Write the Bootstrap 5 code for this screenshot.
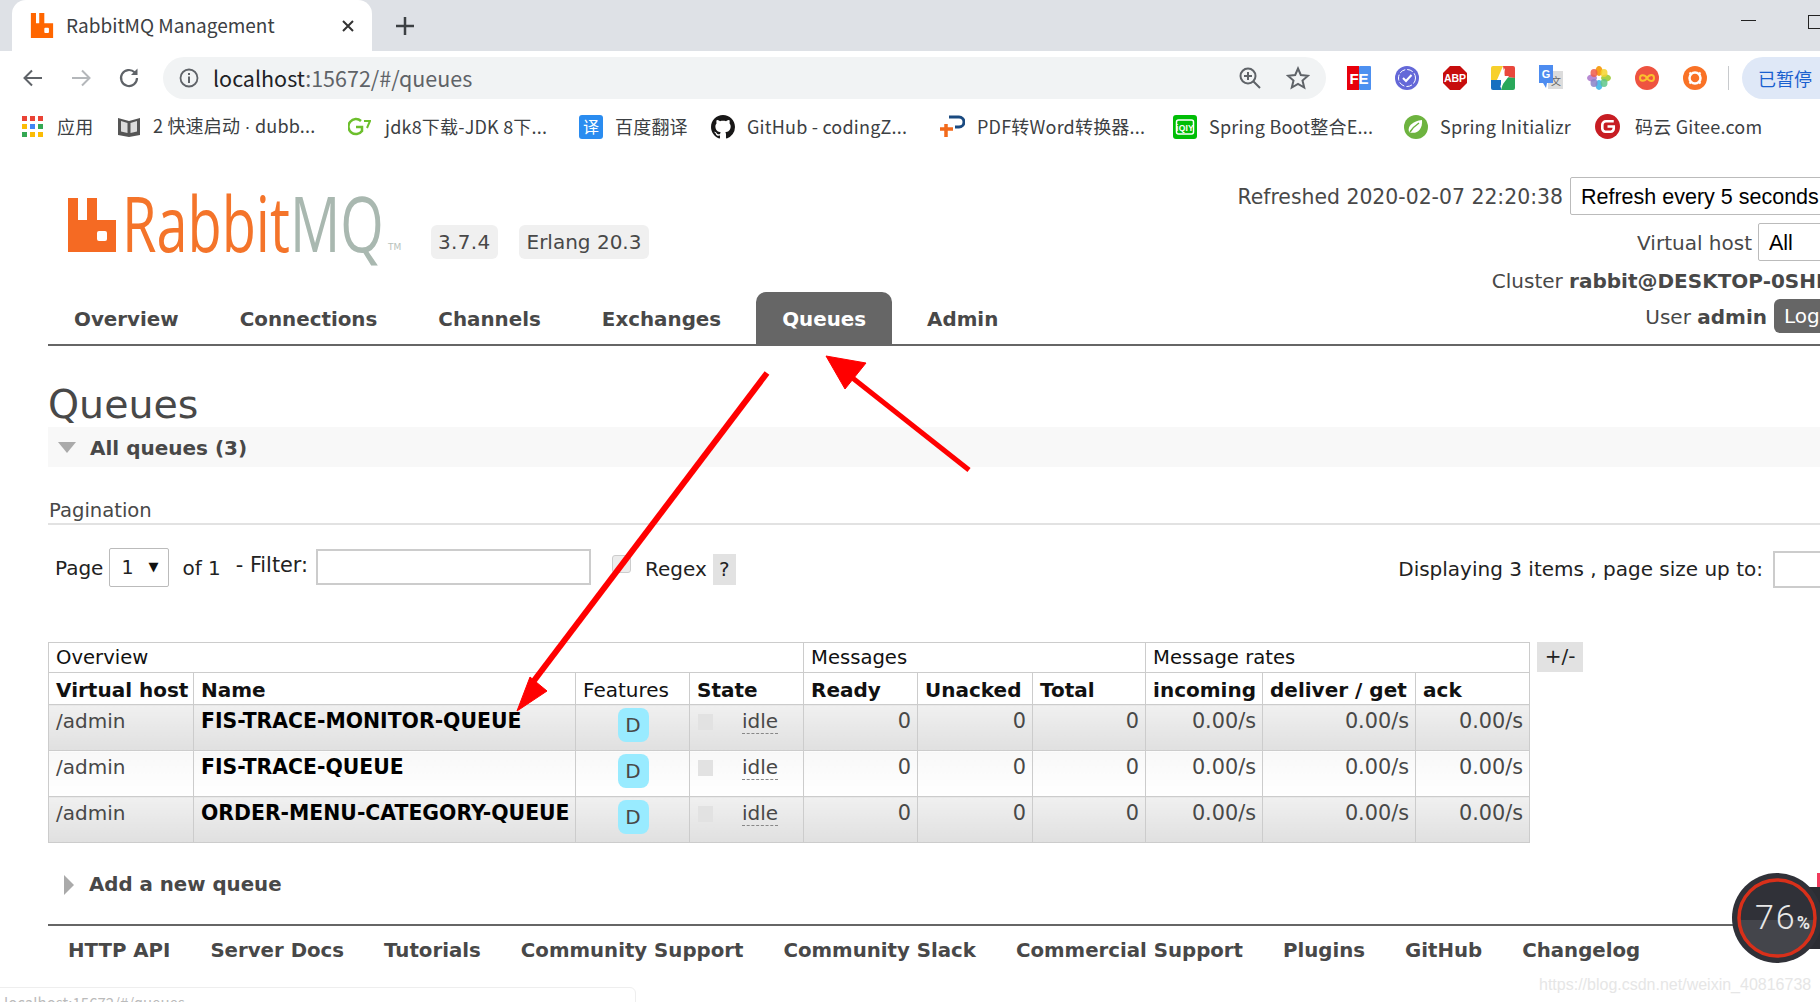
<!DOCTYPE html>
<html lang="en">
<head>
<meta charset="utf-8">
<title>RabbitMQ Management</title>
<link href="https://cdn.jsdelivr.net/npm/bootstrap@5.3.0/dist/css/bootstrap.min.css" rel="stylesheet">
<style>
html,body{margin:0;width:1820px;height:1002px;overflow:hidden;background:#fff}
body{font-family:"DejaVu Sans",Verdana,sans-serif;font-size:20px;color:#484848;position:relative}
.cr{font-family:"Noto Sans CJK SC","Liberation Sans",sans-serif}
.tabstrip{height:51px;background:#dee1e6;padding-left:12px}
.tabbox{width:360px;height:51px;background:#fff;border-radius:14px 14px 0 0;padding:0 17px 0 18px;font-size:19px;color:#3c4043;flex:none}
.tabplus{margin-left:23px;flex:none}
.winbtns{margin-left:auto;gap:52px;margin-right:-3px;align-self:flex-start}
.winmin{width:15px;height:1px;background:#222;margin-top:20px}
.winmax{width:15px;height:14px;border:1px solid #222;margin-top:15px}
.toolbar{height:54px;padding-top:6px;background:#fff}
.toolbar>*{flex:none}
.tbh{height:42px}
.navbtns{width:163px;padding-left:21px;gap:24px}
.urlpill{width:1163px;height:42px;background:#f1f3f4;border-radius:21px;padding:0 16px;font-size:21.5px;color:#202124}
.urlpill .dim{color:#5f6368}
.urltext{margin-left:14px}
.urlicons{margin-left:auto;gap:24px}
.exts{gap:24px;margin-left:21px}
.exts svg{display:block}
.vsep{width:1px;height:24px;background:#c8cacd;margin-left:21px}
.pausepill{margin-left:13px;width:120px;height:42px;border-radius:21px 0 0 21px;background:#dfe8f7;color:#1a5fcf;font-size:18px;padding-left:16px}
.bmbar{height:45px;padding-left:22px;padding-bottom:2px;font-size:18px;letter-spacing:.2px;color:#3c4043;white-space:nowrap}
.bm{gap:12px;flex:none}
.bm:nth-child(1){width:95px;gap:14px}.bm:nth-child(2){width:231px}.bm:nth-child(3){width:231px;gap:14px}.bm:nth-child(4){width:132px}.bm:nth-child(5){width:229px}.bm:nth-child(6){width:233px}.bm:nth-child(7){width:231px}.bm:nth-child(8){width:191px}.bm:nth-child(9){gap:15px}
.middot{font-family:"Liberation Sans",sans-serif}
.pagebox{margin-left:48px;width:1812px}
.hdr{border-bottom:2px solid #666;height:196px}
.leftcol{padding-top:45px}
.logorow{height:64px}
.logobox{width:354px;height:57px;padding-left:20px}
.logoicon{flex:none;display:block;margin-top:3px}
.logotext{display:block;flex:none;width:264px;height:55px;font-family:"Open Sans",sans-serif;font-size:76px;line-height:55px;font-weight:400;color:#f4742a;margin-left:6px;transform:scaleX(.735);transform-origin:left center;white-space:nowrap}
.logotext .g{color:#a9b8b0}
.logotm{font-size:9px;color:#b8c2bc;align-self:flex-end;margin-left:2px;margin-bottom:-2px}
.pillv{background:#f0f0f0;border-radius:6px;height:34px;line-height:35px;padding:0 8px;color:#484848}
.p1{margin-left:29px;width:66.5px;text-align:center;letter-spacing:.35px;padding:0}
.p2{margin-left:21px}
.navmain{margin-top:33px;gap:9px}
.navlnk{display:block;padding:0 26px;height:52px;line-height:55px;font-weight:700;font-size:19.87px;color:#484848;text-decoration:none;border-radius:10px 10px 0 0}
.navlnk.act{background:#666;color:#fff}
.rightcol{padding-top:27px;text-align:right;white-space:nowrap}
.rightcol .txt{margin-top:2px}
.refr{font-size:20.4px}
.sel{height:38px;border:1px solid #bbb;border-radius:2px;background:#fff;color:#000;font-family:"Liberation Sans",sans-serif;font-size:21.5px;padding:0 10px;text-align:left;line-height:38px}
.sel1{width:290px;margin-left:7px}
.sel2{width:102px;margin-left:6px}
.rr{height:38px}
.rr2{margin-top:8px}
.rr3{margin-top:8px;height:24px}
.rr4{margin-top:6px;height:34px}
.clusterbox{margin-right:-19px}
.logbtn{height:34px;line-height:34px;width:86px;background:#666;color:#fff;border-radius:6px;margin-left:7px;padding-left:10px;text-align:left}
.h1q{font-size:39.5px;font-weight:400;line-height:44px;margin:36px 0 0;color:#484848;height:45px}
.sect{height:40px;background:#f8f8f8;font-weight:700;padding-left:10px;gap:14px}
.sect span+span{padding-top:2px}
.tri-d{width:0;height:0;border-left:9px solid transparent;border-right:9px solid transparent;border-top:11px solid #aaa}
.tri-r{width:0;height:0;border-top:10px solid transparent;border-bottom:10px solid transparent;border-left:10px solid #aaa;margin-left:16px}
.paglabel{margin-top:28px;height:30px;line-height:31px;border-bottom:2px solid #e2e2e2;padding-left:1px;font-size:19.6px}
.pagrow{margin-top:22px;height:40px;color:#222}
.psel{width:60px;height:39px;border:1px solid #bbb;border-radius:2px;color:#222;padding:0 10px 0 11px;margin:0 13px 0 6px;font-size:19px}
.psel i{font-style:normal;font-size:13px;color:#111}
.mlpage{margin-left:7px;margin-top:2px}
.mlof{margin-right:15px;margin-top:2px}
.fltlbl{margin-top:-2px;font-size:20.8px}
.fltinput{width:275px;height:36px;border:2px solid #ccc;background:#fff;margin:0 21px 0 8px}
.chk{width:19px;height:18px;border:1px solid #ccc;border-radius:3px;background:#ececec;margin:-6px 14px 0 0}
.rgx{margin-top:4px}
.qmark{width:23px;height:31px;background:#e2e2e2;text-align:center;line-height:31px;margin:4px 0 0 6px}
.dspl{margin-top:3px;margin-left:auto}
.sizeinput{width:87px;height:37px;border:2px solid #ccc;margin:4px 0 0 10px}
.tblwrap{margin-top:55px}
.qt{table-layout:fixed;width:1481px;margin:0;--bs-table-bg:transparent;--bs-table-color:#484848;border-color:#ccc;font-size:20px;border-collapse:collapse}
.qt col:nth-child(1){width:145px}.qt col:nth-child(2){width:382px}.qt col:nth-child(3){width:114px}.qt col:nth-child(4){width:114px}.qt col:nth-child(5){width:114px}.qt col:nth-child(6){width:115px}.qt col:nth-child(7){width:113px}.qt col:nth-child(8){width:117px}.qt col:nth-child(9){width:153px}.qt col:nth-child(10){width:114px}
.qt th,.qt td{border:1px solid #ccc;padding:0 6px 0 7px;vertical-align:top;white-space:nowrap}
.qt thead th{background:#fff;color:#111;height:30px;line-height:28px;padding-top:1px;font-weight:400;font-size:19.6px}
.qt thead tr.sub th{font-weight:700;height:31px;padding-top:3px;font-size:20px}
.qt thead tr.sub th.fw-normal{font-weight:400}
.qt tbody td{height:46px;line-height:32px;color:#484848}
.qt tbody tr.odd td{background:linear-gradient(#f0f0f0,#e0e0e0)}
.qt tbody tr.even td{background:linear-gradient(#f8f8f8,#fff)}
.qt td.nm{font-weight:700;color:#000;font-size:20.4px}
.qt td.num{text-align:right;font-size:20.8px}
.dbadge{display:block;width:31px;height:34px;margin:3px auto 0;background:#99ebff;border-radius:8px;text-align:center;line-height:34px;color:#484848}
.stbox{display:inline-block;width:15px;height:16px;background:#e2e2e2;vertical-align:top;margin:9px 29px 0 1px}
.idle{border-bottom:1px dashed #888}
.plusbtn{width:46px;height:30px;background:#e2e2e2;margin-left:7px;text-align:center;line-height:29px;color:#222}
.addq{margin-top:20px;height:44px;font-weight:700;font-size:19.8px;gap:15px}
.foot{margin-top:17px;border-top:2px solid #666;font-weight:700;font-size:19.75px;padding-top:11px;height:52px;line-height:28px}
.foot a{color:#484848;text-decoration:none;padding:0 20px}
.arrows{position:absolute;left:0;top:0;pointer-events:none}
.statusb{position:absolute;left:-1px;top:987px;width:637px;height:30px;border:1px solid #eee;border-radius:0 6px 0 0;background:#fff;font-size:15px;color:#bbb;padding:6px 0 0 4px;line-height:18px}
.wm{position:absolute;left:1539px;top:973px;font-family:"Liberation Sans",sans-serif;font-size:16px;color:#e6e6e6;white-space:nowrap}
.gauge{position:absolute;left:1732px;top:873px}
</style>
</head>
<body>
<div class="cr">
  <div class="tabstrip d-flex align-items-center">
    <div class="tabbox d-flex align-items-center">
      <svg width="24" height="25" viewBox="0 0 48 54"><path fill="#f60" d="M0 0H11V22H18V0H29V22H48V54H0Z"/><rect x="29" y="32" width="10" height="11" rx="2" fill="#fff"/></svg>
      <span class="ms-2 ps-1 flex-grow-1">RabbitMQ Management</span>
      <svg width="14" height="14" viewBox="0 0 14 14"><path d="M2 2L12 12M12 2L2 12" stroke="#333" stroke-width="2"/></svg>
    </div>
    <svg class="tabplus" width="20" height="20" viewBox="0 0 20 20"><path d="M10 1V19M1 10H19" stroke="#3c4043" stroke-width="2.500"/></svg>
    <div class="winbtns d-flex">
      <div class="winmin"></div><div class="winmax"></div>
    </div>
  </div>
  <div class="toolbar d-flex align-items-start">
    <div class="navbtns tbh d-flex align-items-center">
      <svg width="24" height="24" viewBox="0 0 24 24"><path d="M21 12H4M11 4.500L3.500 12L11 19.500" fill="none" stroke="#5f6368" stroke-width="2"/></svg>
      <svg width="24" height="24" viewBox="0 0 24 24"><path d="M3 12H20M13 4.500L20.500 12L13 19.500" fill="none" stroke="#b4b7ba" stroke-width="2"/></svg>
      <svg width="24" height="24" viewBox="0 0 24 24"><path d="M20 12a8 8 0 1 1-2.400-5.700" fill="none" stroke="#5f6368" stroke-width="2.200"/><path d="M20.500 2.500V9H14Z" fill="#5f6368"/></svg>
    </div>
    <div class="urlpill d-flex align-items-center">
      <svg width="20" height="20" viewBox="0 0 20 20"><circle cx="10" cy="10" r="8.500" fill="none" stroke="#5f6368" stroke-width="1.800"/><rect x="9" y="8.500" width="2" height="6.500" fill="#5f6368"/><rect x="9" y="5" width="2" height="2" fill="#5f6368"/></svg>
      <span class="urltext">localhost<span class="dim">:15672/#/queues</span></span>
      <div class="urlicons d-flex align-items-center">
        <svg width="24" height="24" viewBox="0 0 24 24"><circle cx="10" cy="10" r="7.500" fill="none" stroke="#5f6368" stroke-width="2"/><path d="M15.500 15.500L22 22M6 10H14M10 6V14" stroke="#5f6368" stroke-width="2"/></svg>
        <svg width="24" height="24" viewBox="0 0 24 24"><path d="M12 2.500L14.800 9L22 9.700L16.500 14.500L18.200 21.500L12 17.800L5.800 21.500L7.500 14.500L2 9.700L9.200 9Z" fill="none" stroke="#5f6368" stroke-width="2"/></svg>
      </div>
    </div>
    <div class="tbh d-flex align-items-center">
      <div class="exts d-flex align-items-center">
        <svg width="24" height="24" viewBox="0 0 24 24"><rect width="12" height="24" fill="#e8000b"/><rect x="12" width="12" height="24" rx="1" fill="#4d90f0"/><text x="12" y="18" text-anchor="middle" font-family="Liberation Sans" font-weight="700" font-size="15" fill="#fff">FE</text></svg>
        <svg width="24" height="24" viewBox="0 0 24 24"><circle cx="12" cy="12" r="12" fill="#6468d8"/><circle cx="12" cy="12" r="8.500" fill="none" stroke="#fff" stroke-width="1" stroke-dasharray="6 2"/><path d="M8 12L11 15L16.500 9" fill="none" stroke="#fff" stroke-width="2"/></svg>
        <svg width="24" height="24" viewBox="0 0 24 24"><path d="M7 0H17L24 7V17L17 24H7L0 17V7Z" fill="#c70d0d"/><text x="12" y="16" text-anchor="middle" font-family="Liberation Sans" font-weight="700" font-size="10.500" fill="#fff">ABP</text></svg>
        <svg width="24" height="24" viewBox="0 0 24 24"><path d="M0 2a2 2 0 0 1 2-2H12L6 14L0 16Z" fill="#f7d02c"/><path d="M12 0H22a2 2 0 0 1 2 2V12L14 11Z" fill="#e9473c"/><path d="M14 11L24 12V22a2 2 0 0 1-2 2H10Z" fill="#2aa85a"/><path d="M0 14L10 14V24H2a2 2 0 0 1-2-2Z" fill="#1670c0"/><path d="M14 2L6 14H11L9 22L18 10H13Z" fill="#fff"/></svg>
        <svg width="24" height="26" viewBox="0 0 24 26"><rect x="9" y="6" width="15" height="18" fill="#dcdcdc"/><text x="17" y="20" text-anchor="middle" font-family="Noto Sans CJK SC" font-size="10" fill="#666">文</text><path d="M0 0H14V18H8L7 23L4 18H0Z" fill="#4d8cf0"/><text x="7" y="13" text-anchor="middle" font-family="Liberation Sans" font-weight="700" font-size="11" fill="#fff">G</text></svg>
        <svg width="24" height="24" viewBox="0 0 24 24"><ellipse cx="12" cy="5" rx="3.500" ry="5" fill="#f7a11d"/><ellipse cx="12" cy="19" rx="3.500" ry="5" fill="#54bde8"/><ellipse cx="5" cy="12" rx="5" ry="3.500" fill="#b78ad3"/><ellipse cx="19" cy="12" rx="5" ry="3.500" fill="#a8d14a"/><ellipse cx="7" cy="7" rx="3.500" ry="4" fill="#ee5c4a" opacity=".85"/><ellipse cx="17" cy="7" rx="3.500" ry="4" fill="#f5d430" opacity=".85"/><ellipse cx="7" cy="17" rx="3.500" ry="4" fill="#8a82c8" opacity=".85"/><ellipse cx="17" cy="17" rx="3.500" ry="4" fill="#5fc58a" opacity=".85"/></svg>
        <svg width="24" height="24" viewBox="0 0 24 24"><circle cx="12" cy="12" r="12" fill="#ee5340"/><path d="M12 12C9.500 8 5 8.500 5 12S9.500 16 12 12S19 8 19 12S14.500 16 12 12Z" fill="none" stroke="#fbc02d" stroke-width="2"/></svg>
        <svg width="24" height="24" viewBox="0 0 24 24"><circle cx="12" cy="12" r="12" fill="#f97226"/><circle cx="12" cy="12" r="5.500" fill="none" stroke="#fff" stroke-width="2.500"/><path d="M6.500 6.500L8.500 8.500M17.500 6.500L15.500 8.500M6.500 17.500L8.500 15.500M17.500 17.500L15.500 15.500" stroke="#fff" stroke-width="2"/></svg>
      </div>
      <div class="vsep"></div>
      <div class="pausepill d-flex align-items-center">已暂停</div>
    </div>
  </div>
  <div class="bmbar d-flex align-items-center">
    <div class="bm d-flex align-items-center"><svg width="21" height="21" viewBox="0 0 21 21"><g><rect width="5" height="5" fill="#ea4335"/><rect x="8" width="5" height="5" fill="#ea4335"/><rect x="16" width="5" height="5" fill="#ea4335"/><rect y="8" width="5" height="5" fill="#fbbc05"/><rect x="8" y="8" width="5" height="5" fill="#4285f4"/><rect x="16" y="8" width="5" height="5" fill="#34a853"/><rect y="16" width="5" height="5" fill="#34a853"/><rect x="8" y="16" width="5" height="5" fill="#fbbc05"/><rect x="16" y="16" width="5" height="5" fill="#fbbc05"/></g></svg><span>应用</span></div>
    <div class="bm d-flex align-items-center"><svg width="24" height="22" viewBox="0 0 24 22"><path d="M1 2L12 5L23 2V19L12 21L1 19Z" fill="#555"/><path d="M4 5L10.500 7V17L4 15.500ZM20 5L13.500 7V17L20 15.500Z" fill="#ddd"/></svg><span>2 快速启动 <span class="middot">·</span> dubb...</span></div>
    <div class="bm d-flex align-items-center"><svg width="23" height="22" viewBox="0 0 23 22"><path d="M13 5A7.500 7.500 0 1 0 14 15V11H8" fill="none" stroke="#6cbf2c" stroke-width="2.500"/><path d="M16 5H22L19 12" fill="none" stroke="#6cbf2c" stroke-width="2"/></svg><span>jdk8下载-JDK 8下...</span></div>
    <div class="bm d-flex align-items-center"><svg width="24" height="24" viewBox="0 0 24 24"><rect width="24" height="24" rx="3" fill="#2a8cf0"/><text x="12" y="18" text-anchor="middle" font-family="Noto Sans CJK SC" font-size="16" fill="#fff">译</text></svg><span>百度翻译</span></div>
    <div class="bm d-flex align-items-center"><svg width="24" height="24" viewBox="0 0 16 16"><path fill="#181717" d="M8 0C3.580 0 0 3.580 0 8c0 3.540 2.290 6.530 5.470 7.590.4.070.55-.17.55-.38 0-.19-.01-.82-.01-1.490-2.010.37-2.530-.49-2.690-.94-.09-.23-.48-.94-.82-1.130-.28-.15-.68-.52-.01-.53.63-.01 1.080.58 1.230.82.72 1.210 1.870.87 2.330.66.070-.52.28-.87.51-1.070-1.780-.2-3.640-.89-3.640-3.950 0-.87.31-1.590.82-2.150-.08-.2-.36-1.020.08-2.120 0 0 .67-.21 2.200.82.64-.18 1.320-.27 2-.27s1.360.09 2 .27c1.530-1.040 2.200-.82 2.200-.82.44 1.100.16 1.920.08 2.120.51.56.82 1.270.82 2.150 0 3.070-1.870 3.750-3.650 3.950.29.25.54.73.54 1.480 0 1.070-.01 1.930-.01 2.200 0 .21.15.46.55.38A8.010 8.010 0 0 0 16 8c0-4.420-3.580-8-8-8z"/></svg><span>GitHub - codingZ...</span></div>
    <div class="bm d-flex align-items-center"><svg width="25" height="24" viewBox="0 0 25 24"><path d="M9 2H19a5 5 0 0 1 0 10H15" fill="none" stroke="#1a4a80" stroke-width="3"/><path d="M6 9V22M0 14H13" stroke="#f26a1b" stroke-width="3.500"/></svg><span>PDF转Word转换器...</span></div>
    <div class="bm d-flex align-items-center"><svg width="24" height="24" viewBox="0 0 24 24"><rect width="24" height="24" rx="3" fill="#00be06"/><rect x="3.500" y="5" width="17" height="14" rx="2" fill="none" stroke="#fff" stroke-width="1.500"/><text x="12" y="15.500" text-anchor="middle" font-family="Liberation Sans" font-weight="700" font-size="8.500" fill="#fff">iQIY</text></svg><span>Spring Boot整合E...</span></div>
    <div class="bm d-flex align-items-center"><svg width="24" height="24" viewBox="0 0 24 24"><circle cx="12" cy="12" r="12" fill="#6db33f"/><path d="M18 5C19 15 12 20 5 17C3 11 9 6 18 5Z" fill="#fff"/><path d="M6 17C9 12 12 10 15 8" stroke="#6db33f" stroke-width="1.500" fill="none"/></svg><span>Spring Initializr</span></div>
    <div class="bm d-flex align-items-center"><svg width="25" height="25" viewBox="0 0 24 24"><circle cx="12" cy="12" r="12" fill="#c71d23"/><path d="M18 7H10.500a3.500 3.500 0 0 0-3.500 3.500V14a3 3 0 0 0 3 3h5a3 3 0 0 0 3-3V12H12" fill="none" stroke="#fff" stroke-width="2.500"/></svg><span>码云 Gitee.com</span></div>
  </div>
</div>
<div class="pagebox">
  <div class="hdr d-flex justify-content-between">
    <div class="leftcol">
      <div class="logorow d-flex align-items-start">
        <div class="logobox d-flex">
          <svg class="logoicon" width="48" height="54" viewBox="0 0 48 54"><path fill="#f56a23" d="M0 0H10V22H19V0H29V22H48V54H0Z"/><rect x="29" y="33" width="10" height="10" rx="2" fill="#fff"/></svg>
          <span class="logotext">Rabbit<span class="g">MQ</span></span>
          <span class="logotm">TM</span>
        </div>
        <div class="pillv p1 mt-auto">3.7.4</div>
        <div class="pillv p2 mt-auto">Erlang 20.3</div>
      </div>
      <nav class="navmain d-flex">
        <a class="navlnk" href="#">Overview</a>
        <a class="navlnk" href="#">Connections</a>
        <a class="navlnk" href="#">Channels</a>
        <a class="navlnk" href="#">Exchanges</a>
        <a class="navlnk act" href="#">Queues</a>
        <a class="navlnk" href="#">Admin</a>
      </nav>
    </div>
    <div class="rightcol">
      <div class="rr d-flex justify-content-end align-items-center"><span class="txt refr">Refreshed 2020-02-07 22:20:38</span><div class="sel sel1">Refresh every 5 seconds</div></div>
      <div class="rr rr2 d-flex justify-content-end align-items-center"><span class="txt">Virtual host</span><div class="sel sel2">All</div></div>
      <div class="rr3 d-flex justify-content-end align-items-center"><span class="clusterbox">Cluster <b>rabbit@DESKTOP-0SHDQ1V</b></span></div>
      <div class="rr4 d-flex justify-content-end align-items-center"><span class="txt">User <b>admin</b></span><div class="logbtn">Log out</div></div>
    </div>
  </div>
  <h1 class="h1q">Queues</h1>
  <div class="sect d-flex align-items-center"><span class="tri-d"></span><span>All queues (3)</span></div>
  <div class="paglabel">Pagination</div>
  <div class="pagrow d-flex align-items-center">
    <span class="mlpage">Page</span>
    <div class="psel d-flex align-items-center justify-content-between"><span>1</span><i>▼</i></div>
    <span class="mlof">of 1</span>
    <span class="fltlbl">- Filter:</span>
    <div class="fltinput"></div>
    <div class="chk"></div>
    <span class="rgx">Regex</span>
    <div class="qmark">?</div>
    <span class="dspl">Displaying 3 items , page size up to:</span>
    <div class="sizeinput"></div>
  </div>
  <div class="tblwrap d-flex align-items-start">
    <table class="table qt">
      <colgroup><col><col><col><col><col><col><col><col><col><col></colgroup>
      <thead>
        <tr><th colspan="4">Overview</th><th colspan="3">Messages</th><th colspan="3">Message rates</th></tr>
        <tr class="sub"><th>Virtual host</th><th>Name</th><th class="fw-normal">Features</th><th>State</th><th>Ready</th><th>Unacked</th><th>Total</th><th>incoming</th><th>deliver / get</th><th>ack</th></tr>
      </thead>
      <tbody>
        <tr class="odd"><td>/admin</td><td class="nm">FIS-TRACE-MONITOR-QUEUE</td><td><span class="dbadge">D</span></td><td><span class="stbox"></span><span class="idle">idle</span></td><td class="num">0</td><td class="num">0</td><td class="num">0</td><td class="num">0.00/s</td><td class="num">0.00/s</td><td class="num">0.00/s</td></tr>
        <tr class="even"><td>/admin</td><td class="nm">FIS-TRACE-QUEUE</td><td><span class="dbadge">D</span></td><td><span class="stbox"></span><span class="idle">idle</span></td><td class="num">0</td><td class="num">0</td><td class="num">0</td><td class="num">0.00/s</td><td class="num">0.00/s</td><td class="num">0.00/s</td></tr>
        <tr class="odd"><td>/admin</td><td class="nm">ORDER-MENU-CATEGORY-QUEUE</td><td><span class="dbadge">D</span></td><td><span class="stbox"></span><span class="idle">idle</span></td><td class="num">0</td><td class="num">0</td><td class="num">0</td><td class="num">0.00/s</td><td class="num">0.00/s</td><td class="num">0.00/s</td></tr>
      </tbody>
    </table>
    <div class="plusbtn">+/-</div>
  </div>
  <div class="addq d-flex align-items-center"><span class="tri-r"></span><span>Add a new queue</span></div>
  <div class="foot d-flex"><a href="#">HTTP API</a><a href="#">Server Docs</a><a href="#">Tutorials</a><a href="#">Community Support</a><a href="#">Community Slack</a><a href="#">Commercial Support</a><a href="#">Plugins</a><a href="#">GitHub</a><a href="#">Changelog</a></div>
</div>
<div class="statusb cr">localhost:15672/#/queues</div>
<div class="wm">https://blog.csdn.net/weixin_40816738</div>
<svg class="arrows" width="1820" height="1002" viewBox="0 0 1820 1002">
  <path d="M767 373L533 682" stroke="#f00" stroke-width="6" fill="none"/>
  <path d="M517 711L530 677L547 691Z" fill="#f00" stroke="#f00" stroke-width="1"/>
  <path d="M969 470L845 372" stroke="#f00" stroke-width="5" fill="none"/>
  <path d="M826 356L866 363L845 389Z" fill="#f00" stroke="#f00" stroke-width="1"/>
</svg>
<svg class="gauge" width="88" height="92" viewBox="0 0 88 92">
  <rect x="70" y="14" width="18" height="62" fill="#2c2d33"/>
  <rect x="85" y="0" width="3" height="14" fill="#f23b5c"/>
  <circle cx="45" cy="45" r="45" fill="#303138"/>
  <path d="M8 47H82A37 37 0 0 1 8 47Z" fill="#44454b"/>
  <circle cx="45" cy="45" r="38" fill="none" stroke="#d9301a" stroke-width="3.500"/>
  <text x="23" y="56" font-family="Roboto,Liberation Sans" font-weight="300" font-size="34" letter-spacing="2" fill="#e8e8e8">76<tspan font-size="18" font-weight="700" letter-spacing="0">%</tspan></text>
</svg>
<script src="https://cdn.jsdelivr.net/npm/bootstrap@5.3.0/dist/js/bootstrap.bundle.min.js"></script>
</body>
</html>
